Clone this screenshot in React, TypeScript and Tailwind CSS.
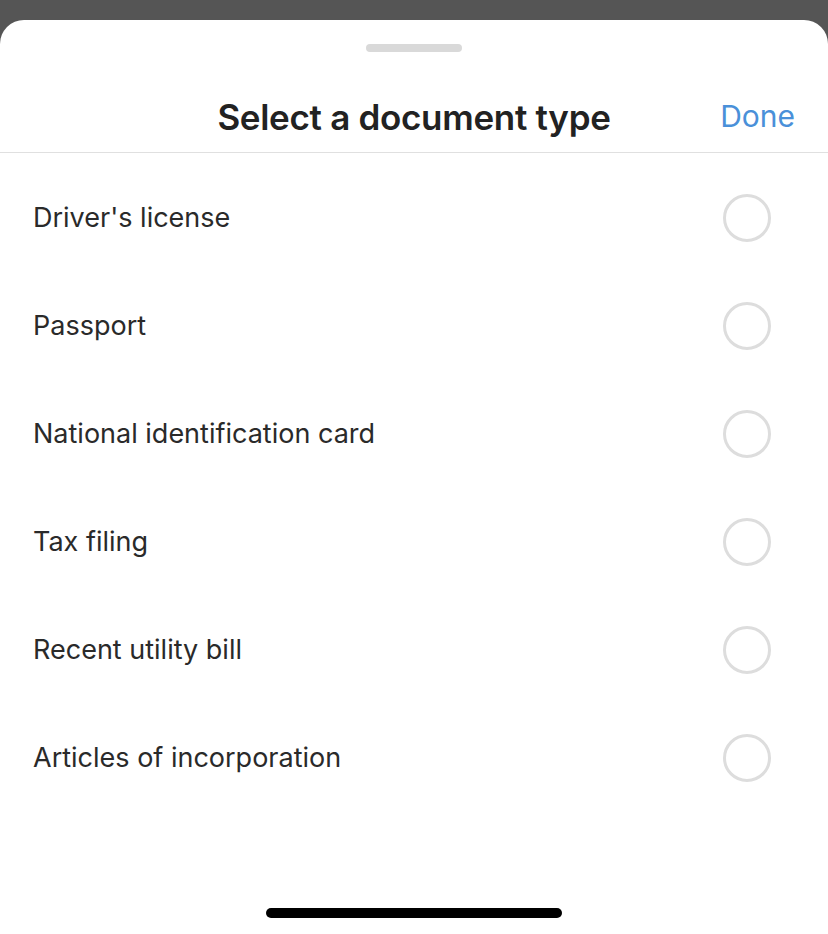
const options = [
    "Driver's license",
    'Passport',
    'National identification card',
    'Tax filing',
    'Recent utility bill',
    'Articles of incorporation',
];

export default function App() {
    return (
        <div className="w-[828px] h-[934px] bg-[#555555] flex flex-col font-['Inter',sans-serif] overflow-hidden">
            <div className="h-[20px] shrink-0" />
            <div className="flex-1 bg-white rounded-t-[24px] flex flex-col">
                {/* Grabber */}
                <div className="flex justify-center pt-[24px]">
                    <div className="w-[96px] h-[8px] rounded-full bg-[#d9d9d9]" />
                </div>

                {/* Header */}
                <div className="relative h-[101px] flex items-center justify-center border-b border-[#e0e0e0]">
                    <h1 className="text-[35px] leading-none font-semibold text-[#222222] tracking-[-0.3px] mt-[30px]">
                        Select a document type
                    </h1>
                    <button className="absolute right-[33px] top-[49px] text-[30px] text-[#4a90d9] leading-none">Done</button>
                </div>

                {/* Options */}
                <div className="flex flex-col pt-[11px]">
                    {options.map((label) => (
                        <div key={label} className="h-[108px] flex items-center justify-between pl-[33px] pr-[57px]">
                            <span className="text-[27px] text-[#2a2a2a]">{label}</span>
                            <div className="w-[48px] h-[48px] rounded-full border-[3px] border-[#dddddd]" />
                        </div>
                    ))}
                </div>

                <div className="flex-1" />

                {/* Home indicator */}
                <div className="flex justify-center pb-[16px]">
                    <div className="w-[296px] h-[10px] rounded-full bg-black" />
                </div>
            </div>
        </div>
    );
}
